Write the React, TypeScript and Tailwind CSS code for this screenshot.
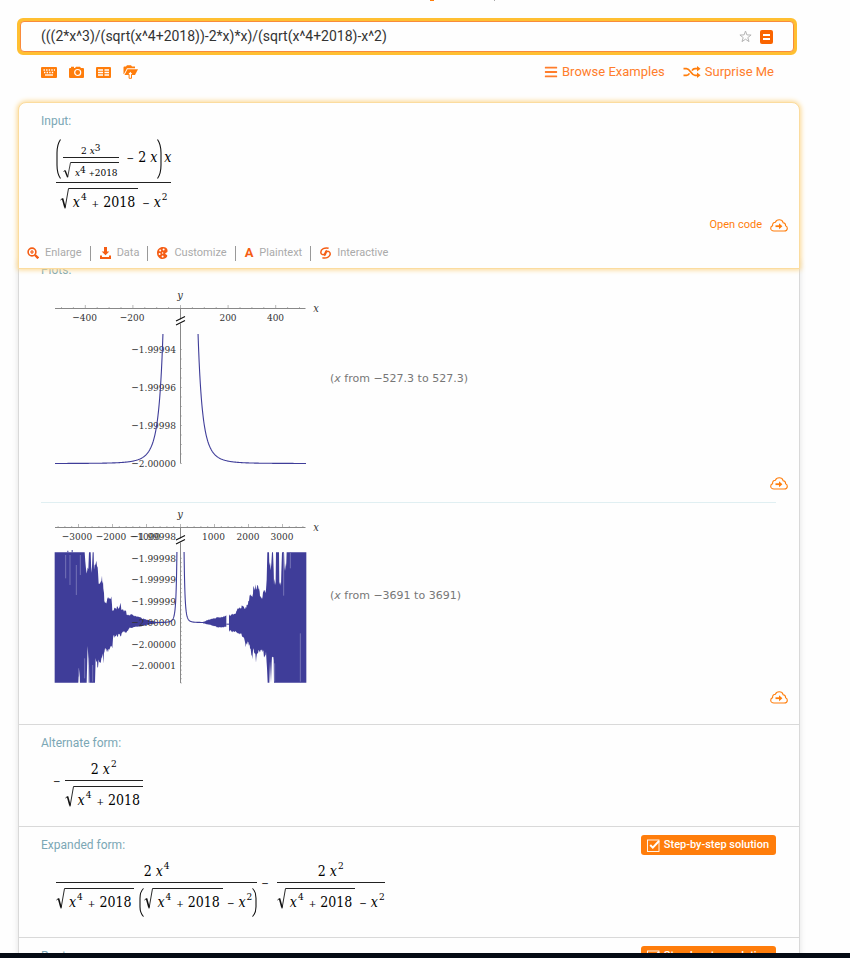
import type { ReactNode } from 'react';
import { FaBars } from 'react-icons/fa';

const SERIF = "font-['DejaVu_Serif_Condensed','Liberation_Serif',serif]";

/* ---------- formula parts ---------- */

function T({ children }: { children: ReactNode }) {
  return <span className="whitespace-pre text-sm leading-5">{children}</span>;
}

function X({ p }: { p?: string }) {
  return (
    <>
      <i>x</i>
      {p && <sup className="static ml-px align-[7px] text-[10px] leading-[0]">{p}</sup>}
    </>
  );
}

function Plus() {
  return <span className="ml-[5px] mr-1 text-[10px] leading-[0]">+</span>;
}

function Minus() {
  return <span className="mx-1 text-[10px] leading-[0]">−</span>;
}

function Sqrt({ children, small = false }: { children: ReactNode; small?: boolean }) {
  return (
    <span className="inline-flex items-stretch">
      <svg className={small ? 'h-[17px] w-2' : 'h-6 w-[9px]'} viewBox={small ? '0 0 8 17' : '0 0 9 24'} fill="none" stroke="#111">
        {small ? (
          <>
            <path d="M0.5 9.5L2 8.5" strokeWidth="0.8" />
            <path d="M2 8.5L4.6 15" strokeWidth="1.4" />
            <path d="M4.6 15.5L7.5 0.5H8" strokeWidth="0.8" />
          </>
        ) : (
          <>
            <path d="M0.5 12L2.5 10.5" strokeWidth="0.9" />
            <path d="M2.5 10.5L5 19.5" strokeWidth="1.6" />
            <path d="M5 20.5L8.5 0.5H9" strokeWidth="0.9" />
          </>
        )}
      </svg>
      <span className={`flex border-t border-[#222] ${small ? 'pl-1 pr-px pt-1' : 'pl-1 pr-[3px] pt-[3px]'}`}>{children}</span>
    </span>
  );
}

function Paren({ right = false, tall = false }: { right?: boolean; tall?: boolean }) {
  return (
    <svg
      className={`w-[5px] ${tall ? 'h-10' : 'h-[29px]'} ${right ? '-scale-x-100' : ''}`}
      viewBox="0 0 5 40"
      preserveAspectRatio="none"
      fill="none"
      stroke="#111"
    >
      <path d="M4.5 0.5C2 4 1 8 1 14V26C1 32 2 36 4.5 39.5" strokeWidth="1.1" />
    </svg>
  );
}

function Frac({ top, bottom }: { top: ReactNode; bottom: ReactNode }) {
  return (
    <span className="inline-flex flex-col items-center">
      <span className="flex">{top}</span>
      <span className="mb-[5px] mt-px h-px w-full bg-[#222]" />
      <span className="flex items-start">{bottom}</span>
    </span>
  );
}

function Radicand() {
  return (
    <Sqrt>
      <T><X p="4" /><Plus />2018</T>
    </Sqrt>
  );
}

function MinusXSquared() {
  return (
    <span className="mt-1 flex"><T><Minus /><X p="2" /></T></span>
  );
}

function InputFormula() {
  return (
    <div className={`ml-[37px] mt-2 flex text-black ${SERIF}`}>
      <Frac
        top={
          <span className="mb-[2px] flex items-start">
            <Paren tall />
            <span className="mt-1.5 inline-flex flex-col items-center px-0.5 text-[10px] leading-3">
              <span>2 <i>x</i><sup className="static align-[3px] text-[10px] leading-[0]">3</sup></span>
              <span className="mb-1 h-px w-full bg-[#222]" />
              <Sqrt small>
                <span className="leading-3"><i>x</i><sup className="static align-[3px] text-[10px] leading-[0]">4</sup> <span className="text-[8px] leading-[0]">+</span>2018</span>
              </Sqrt>
            </span>
            <span className="mt-2 flex pl-0.5"><T><Minus />2 <X /></T></span>
            <Paren right tall />
            <span className="mt-2 flex pl-0.5"><T><X /></T></span>
          </span>
        }
        bottom={<><Radicand /><MinusXSquared /></>}
      />
    </div>
  );
}

function AlternateFormula() {
  return (
    <div className={`ml-[30px] mt-1.5 flex items-start text-black ${SERIF}`}>
      <span className="mt-[11px] flex"><T><Minus /></T></span>
      <Frac top={<T>2 <X p="2" /></T>} bottom={<Radicand />} />
    </div>
  );
}

function ExpandedFormula() {
  return (
    <div className={`ml-[37px] mt-1.5 flex items-start text-black ${SERIF}`}>
      <Frac
        top={<T>2 <X p="4" /></T>}
        bottom={
          <>
            <Radicand />
            <span className="ml-[5px] flex"><Paren /></span>
            <Radicand />
            <MinusXSquared />
            <Paren right />
          </>
        }
      />
      <span className="mr-1 mt-[11px] flex"><T><Minus /></T></span>
      <Frac top={<T>2 <X p="2" /></T>} bottom={<><Radicand /><MinusXSquared /></>} />
    </div>
  );
}

/* ---------- plots ---------- */

const CX = 138.5;

function range(n: number) {
  return Array.from({ length: n * 2 + 1 }, (_, i) => i - n);
}

function branch(sign: number, perX: number, perY: number, base: number, top: number, max: number) {
  const start = Math.pow((2018 * perY) / (base - top), 0.25);
  const pts: string[] = [];
  for (let i = 0; i <= 160; i++) {
    const v = start * Math.pow(max / start, i / 160);
    pts.push(`${(CX + sign * v * perX).toFixed(2)},${(base - (2018 * perY) / Math.pow(v, 4)).toFixed(2)}`);
  }
  return pts.join(' ');
}

interface AxesProps {
  step: number;
  count: number;
  major: number;
  bottom: number;
  yStep: number;
  xLabels: [number, string][];
  yLabels: [number, string][];
}

function Axes({ step, count, major, bottom, yStep, xLabels, yLabels }: AxesProps) {
  const yTicks = Array.from({ length: Math.floor((bottom - 44) / yStep) }, (_, i) => bottom - i * yStep);
  return (
    <g>
      <g stroke="#888" strokeWidth="1" fill="none">
        <path d="M13 20.5H263.5" />
        <path d={`M${CX} 20V${bottom}`} />
        {range(count).map((i) => (
          <path key={i} strokeWidth="0.6" d={`M${CX + i * step} 20V${i % major === 0 ? 17 : 19}`} />
        ))}
        {yTicks.map((y) => (
          <path key={y} strokeWidth="0.5" d={`M${CX} ${y}h1.5`} />
        ))}
      </g>
      <path d="M134 34L143 29V33L134 38Z" fill="#fefefe" />
      <path d="M134 33L143 28.5M134 37L143 32.5" stroke="#111" strokeWidth="1.1" />
      <g fill="#333" className={`text-[10px] ${SERIF}`}>
        {xLabels.map(([x, t]) => (
          <text key={t} x={x} y="33" textAnchor="middle">{t}</text>
        ))}
        {yLabels.map(([y, t]) => (
          <text key={y} x="134" y={y} textAnchor="end">{t}</text>
        ))}
        <text x="138" y="11" textAnchor="middle" className="text-[11px] italic">y</text>
        <text x="274" y="24" textAnchor="middle" className="text-[11px] italic">x</text>
      </g>
    </g>
  );
}

function NearPlot() {
  return (
    <svg className="h-[183px] w-[288px] shrink-0" viewBox="0 0 288 183" role="img" aria-label="Plot for x from −527.3 to 527.3">
      <Axes
        step={11.9}
        count={10}
        major={4}
        bottom={175.5}
        yStep={9.5}
        xLabels={[[42.5, '−400'], [90, '−200'], [186, '200'], [233.5, '400']]}
        yLabels={[[65, '−1.99994'], [103, '−1.99996'], [141, '−1.99998'], [179, '−2.00000']]}
      />
      <g fill="none" stroke="#3f3d99" strokeWidth="1.1">
        <polyline points={branch(-1, 0.238, 1900000, 175.5, 46, 527.3)} />
        <polyline points={branch(1, 0.238, 1900000, 175.5, 46, 527.3)} />
      </g>
    </svg>
  );
}

type Pt = [number, number];

const LEFT_TOP: Pt[] = [[14, 22], [104, 22], [108, 60], [113, 45], [117, 22], [122, 22], [124, 80], [128, 22], [131, 22], [132, 60], [135, 38], [141, 38], [144, 80], [148, 100], [152, 95], [157, 85], [160, 110], [163, 150], [167, 165], [172, 152], [184, 145], [187, 190], [197, 185], [205, 183], [211, 170], [214, 190], [228, 195], [230, 208], [245, 207], [260, 212], [280, 220], [300, 226], [325, 232]];
const LEFT_BOTTOM: Pt[] = [[14, 413], [84, 413], [87, 400], [90, 413], [110, 413], [113, 320], [118, 413], [135, 413], [137, 350], [142, 368], [152, 370], [156, 340], [160, 362], [163, 330], [170, 333], [178, 322], [187, 315], [190, 280], [205, 275], [213, 275], [218, 262], [228, 265], [240, 250], [260, 247], [280, 243], [300, 239], [325, 234]];
const RIGHT_A_TOP: Pt[] = [[70, 230], [85, 224], [105, 218], [125, 214], [139, 211]];
const RIGHT_A_BOTTOM: Pt[] = [[70, 236], [90, 240], [110, 247], [125, 250], [139, 245]];
const RIGHT_B_TOP: Pt[] = [[147, 207], [165, 205], [172, 190], [185, 180], [195, 185], [200, 175], [205, 165], [210, 145], [215, 150], [220, 118], [230, 115], [237, 112], [240, 135], [247, 150], [252, 125], [258, 125], [260, 95], [262, 22], [267, 22], [268, 60], [272, 40], [276, 22], [279, 22], [282, 90], [287, 100], [288, 22], [297, 22], [298, 100], [303, 100], [304, 50], [306, 22], [312, 22], [317, 60], [320, 22], [379, 22]];
const RIGHT_B_BOTTOM: Pt[] = [[147, 262], [165, 262], [180, 270], [192, 280], [197, 315], [203, 300], [210, 310], [217, 345], [222, 325], [229, 360], [232, 330], [240, 335], [250, 330], [253, 345], [258, 340], [261, 380], [263, 413], [268, 413], [270, 350], [273, 413], [276, 350], [281, 350], [282, 413], [379, 413]];

function jagged(pts: Pt[]) {
  const out: string[] = [];
  let k = 1;
  for (let i = 0; i < pts.length - 1; i++) {
    const [x0, y0] = pts[i];
    const [x1, y1] = pts[i + 1];
    for (let x = x0; x < x1; x += 2) {
      k = (k * 73 + 41) % 101;
      const y = y0 + ((y1 - y0) * (x - x0)) / (x1 - x0);
      const full = y <= 22.5 || y >= 412.5;
      out.push(`${x},${(full ? y : y + (232 - y) * 0.22 * (k / 101)).toFixed(1)}`);
    }
  }
  out.push(pts[pts.length - 1].join(','));
  return out;
}

function band(top: Pt[], bottom: Pt[]) {
  return [...jagged(top), ...jagged(bottom).reverse()].join(' ');
}

function FarPlot() {
  return (
    <svg className="h-[178px] w-[288px] shrink-0" viewBox="0 0 288 178" role="img" aria-label="Plot for x from −3691 to 3691">
      <g fill="#3f3d99">
        <g transform="translate(8 38) scale(0.33333)">
          <polygon points={band(LEFT_TOP, LEFT_BOTTOM)} />
          <path d="M52 22V17H55V22M65 22V15H68V22" />
          <g stroke="#8f8ec6" strokeWidth="2">
            <path d="M60 30V120M79 60V150M91 30V90M86 370V413M47 30V100M104 340V400M116 340V413M128 360V410" />
          </g>
        </g>
        <g transform="translate(138 38) scale(0.33333)">
          <polygon points={band(RIGHT_A_TOP, RIGHT_A_BOTTOM)} />
          <polygon points={band(RIGHT_B_TOP, RIGHT_B_BOTTOM)} />
          <path d="M139 236H147V239H139Z" />
          <g stroke="#8f8ec6" strokeWidth="2">
            <path d="M311 24V152M361 265V410M331 24V70M284 355V410" />
          </g>
        </g>
      </g>
      <Axes
        step={6.8}
        count={18}
        major={5}
        bottom={176}
        yStep={4.3}
        xLabels={[[35, '−3000'], [69, '−2000'], [103, '−1000'], [171.5, '1000'], [206, '2000'], [240, '3000']]}
        yLabels={[[33, '−1.99998'], [55, '−1.99998'], [76, '−1.99999'], [98, '−1.99999'], [119, '−2.00000'], [141, '−2.00000'], [162, '−2.00001']]}
      />
      <g fill="none" stroke="#3f3d99" strokeWidth="1.1">
        <polyline points={branch(-1, 0.034, 4300000, 115.5, 45, 1100)} />
        <polyline points={branch(1, 0.034, 4300000, 115.5, 45, 800)} />
      </g>
    </svg>
  );
}

/* ---------- icons ---------- */

function CloudIcon() {
  return (
    <svg className="h-[13px] w-[18px]" viewBox="0 0 18 13" fill="none" stroke="#ff7d0b" strokeWidth="1.1">
      <path d="M4 12C2 12 0.7 10.8 0.7 9.2C0.7 7.8 1.6 6.9 2.6 6.6C2.4 4.6 3.6 3.3 5.4 3.3C6 1.7 7.3 0.8 9.2 0.8C11.3 0.8 12.7 2 13.1 3.7C14.8 3.9 15.7 5 15.6 6.7C16.7 7.1 17.3 8 17.3 9.2C17.3 10.9 16 12 14.2 12Z" />
      <path d="M5.5 7.2H10" strokeWidth="1.8" />
      <path d="M9 4.2L12.4 7.2L9 10.2Z" fill="#ff7d0b" stroke="none" />
    </svg>
  );
}

function StarIcon() {
  return (
    <svg className="size-[13px]" viewBox="0 0 13 13" fill="none" stroke="#b5b5b5" strokeWidth="1">
      <path d="M6.5 1L7.9 4.9L12.1 5L8.8 7.6L10 11.6L6.5 9.2L3 11.6L4.2 7.6L0.9 5L5.1 4.9Z" />
    </svg>
  );
}

function ShuffleIcon() {
  return (
    <svg className="h-3 w-[18px]" viewBox="0 0 18 12" fill="none" stroke="#ff7d0b" strokeWidth="1.7">
      <path d="M0.5 2.7H3.5C7.5 2.7 8 9.3 12 9.3H14.5" />
      <path d="M0.5 9.3H3.5C4.9 9.3 5.8 8.5 6.5 7.4M9 4.6C9.7 3.5 10.6 2.7 12 2.7H14.5" />
      <path d="M14 0L17.6 2.7L14 5.4ZM14 6.6L17.6 9.3L14 12Z" fill="#ff7d0b" stroke="none" />
    </svg>
  );
}

function TableIcon() {
  return (
    <svg className="h-[11px] w-[15px]" viewBox="0 0 15 11">
      <rect width="15" height="11" rx="1" fill="#ff7d0b" />
      <path d="M2 3H7M8.5 3H13M2 5.5H7M8.5 5.5H13M2 8H7M8.5 8H13" stroke="#fff" strokeWidth="1.3" />
    </svg>
  );
}

function KeyboardIcon() {
  return (
    <svg className="h-[11px] w-4" viewBox="0 0 16 11">
      <rect width="16" height="11" rx="1" fill="#ff7d0b" />
      <path d="M2.5 3H14M3 5.5H13" stroke="#fff" strokeWidth="1.3" strokeDasharray="1.4 1.2" />
      <path d="M4 8H12" stroke="#fff" strokeWidth="1.3" />
    </svg>
  );
}

function CameraIcon() {
  return (
    <svg className="h-3 w-[15px]" viewBox="0 0 15 12">
      <path d="M1 2H2V0.8H5V2H6L7 0.8H11L12 2H14Q15 2 15 3V11Q15 12 14 12H1Q0 12 0 11V3Q0 2 1 2Z" fill="#ff7d0b" />
      <circle cx="8.7" cy="6.5" r="3" fill="none" stroke="#fff" strokeWidth="1.2" />
    </svg>
  );
}

function UploadIcon() {
  return (
    <svg className="h-[14px] w-[15px]" viewBox="0 0 15 14">
      <path d="M0.5 9V2.5Q0.5 1.5 1.5 1.5H3L4 0.3H8L9 1.5H12V3.2H4L1 9Z" fill="#ff7d0b" />
      <path d="M4.5 4.2H15L12 10H1.5Z" fill="#ff7d0b" />
      <path d="M7.3 6.4L10.2 9.4H8.5V13.3H6.1V9.4H4.4Z" fill="#fff" stroke="#ff7d0b" strokeWidth="1" />
    </svg>
  );
}

function EnlargeIcon() {
  return (
    <svg className="size-3" viewBox="0 0 12 12" fill="none" stroke="#f55d14">
      <circle cx="5" cy="5" r="3.9" strokeWidth="1.6" />
      <path d="M8 8L11.3 11.3" strokeWidth="2.4" />
      <path d="M5 3V7M3 5H7" strokeWidth="1.2" />
    </svg>
  );
}

function DownloadIcon() {
  return (
    <svg className="h-3 w-[11px]" viewBox="0 0 11 12" fill="#f55d14">
      <path d="M4 0H7V4.5H9.3L5.5 8.3L1.7 4.5H4Z" />
      <path d="M0 8.5H2V10H9V8.5H11V12H0Z" />
    </svg>
  );
}

function PaletteIcon() {
  return (
    <svg className="h-3 w-[11px]" viewBox="0 0 11 12">
      <path d="M6 0C9 0 10.6 1.6 10.6 4C10.6 5.4 9.4 5.6 8.6 6C7.8 6.6 8.6 7.4 9.6 7.8C10.6 8.3 10.4 9.4 9.6 10.3C8.6 11.5 7.2 12 5.8 12C2.4 12 0 9.4 0 6C0 2.4 2.6 0 6 0Z" fill="#f55d14" />
      <g fill="#fff">
        <circle cx="6.6" cy="2.4" r="1" />
        <circle cx="3.2" cy="3.6" r="1" />
        <circle cx="2.6" cy="7" r="1" />
        <circle cx="5.6" cy="6" r="0.8" />
        <circle cx="5.6" cy="9.4" r="1" />
      </g>
    </svg>
  );
}

function InteractiveIcon() {
  return (
    <svg className="h-3 w-[11px]" viewBox="0 0 11 12" fill="none" stroke="#f55d14" strokeWidth="1.5">
      <path d="M8.6 1.2C4.8 0.2 0.8 2 0.8 5.2C0.8 7.4 3 8.2 4.4 7.2C5.8 6.2 4.8 4.2 6.8 3.4" />
      <path d="M2.4 10.8C6.2 11.8 10.2 10 10.2 6.8C10.2 4.6 8 3.8 6.6 4.8C5.2 5.8 6.2 7.8 4.2 8.6" />
    </svg>
  );
}

/* ---------- page pieces ---------- */

function Heading({ children }: { children: ReactNode }) {
  return <h2 className="pl-[22px] text-xs leading-5 text-[#7ba7b5]">{children}</h2>;
}

function StepButton() {
  return (
    <button className="flex h-5 items-center gap-1 rounded-[3px] bg-[#ff7d0b] pl-1.5 pr-[7px] text-[11px] font-medium text-white">
      <svg className="size-[13px]" viewBox="0 0 13 13" fill="none" stroke="#fff">
        <rect x="0.5" y="1" width="11.5" height="11.5" strokeWidth="0.9" />
        <path d="M3.2 6L5.8 8.6L12 2" strokeWidth="2" />
      </svg>
      Step-by-step solution
    </button>
  );
}

function CloudRow() {
  return (
    <div className="flex justify-end pr-[11px]">
      <button aria-label="Open code" className="flex h-4 items-center"><CloudIcon /></button>
    </div>
  );
}

function ToolLink({ icon, label, last = false }: { icon: ReactNode; label: string; last?: boolean }) {
  return (
    <li className={`flex h-[15px] items-center ${last ? '' : 'mr-[9px] border-r border-[#999] pr-2'}`}>
      <a href="#" className="flex items-center gap-1.5">{icon}{label}</a>
    </li>
  );
}

export default function App() {
  return (
    <div className="flex h-screen flex-col overflow-hidden bg-[#fefefe] font-['Roboto',sans-serif]">
      <main className="min-h-0 flex-1 overflow-hidden">
        <div className="flex h-px justify-center gap-[60px] pl-[74px]">
          <span className="w-1 bg-[#ff7d0b]" />
          <span className="w-px bg-[#aaa]" />
        </div>

        <form className="ml-[17px] mr-[53px] mt-[17px] rounded-md border-[3px] border-[#ffbf31] bg-[#ffbf31]">
          <div className="flex h-[31px] items-center gap-2 rounded-[4px] border border-[#f98b3c] bg-[#fefefe] pl-5 pr-5">
            <input
              aria-label="Query"
              className="mb-px min-w-0 flex-1 bg-transparent text-sm text-[#333] outline-none"
              defaultValue="(((2*x^3)/(sqrt(x^4+2018))-2*x)*x)/(sqrt(x^4+2018)-x^2)"
            />
            <button type="button" aria-label="Favorite"><StarIcon /></button>
            <button type="button" aria-label="Compute" className="flex h-[14px] w-[13px] flex-col items-center justify-center gap-[2px] rounded-[2px] bg-[#fa6400]">
              <span className="h-[2px] w-[7px] bg-white" />
              <span className="h-[2px] w-[7px] bg-white" />
            </button>
          </div>
        </form>

        <nav className="ml-[41px] mr-[76px] mt-[7px] flex h-5 items-center justify-between">
          <div className="flex items-center gap-3">
            <button aria-label="Keyboard"><KeyboardIcon /></button>
            <button aria-label="Image"><CameraIcon /></button>
            <button aria-label="Table"><TableIcon /></button>
            <button aria-label="Upload"><UploadIcon /></button>
          </div>
          <div className="flex items-center gap-[18px] text-[13px] text-[#ff7d2b]">
            <a href="#" className="flex items-center gap-1"><FaBars className="size-[14px]" />Browse Examples</a>
            <a href="#" className="flex items-center gap-1"><ShuffleIcon />Surprise Me</a>
          </div>
        </nav>

        <div className="ml-[18px] mr-[50px] mt-5">
          <section className="relative z-10 rounded-t-lg border border-[#fbdc9f] bg-[#fefefe] pb-[5px] pt-2 shadow-[0_0_5px_1px_#fcd890]">
            <Heading>Input:</Heading>
            <InputFormula />
            <div className="mt-[3px] flex h-5 items-center justify-end pr-[11px]">
              <button className="flex items-center gap-2 text-[11px] text-[#ff7d0b]">Open code<CloudIcon /></button>
            </div>
            <ul className="mt-2 flex h-5 items-center pl-2 text-[11px] text-[#aaa]">
              <ToolLink icon={<EnlargeIcon />} label="Enlarge" />
              <ToolLink icon={<DownloadIcon />} label="Data" />
              <ToolLink icon={<PaletteIcon />} label="Customize" />
              <ToolLink icon={<b className="text-[13px] text-[#f55d14]">A</b>} label="Plaintext" />
              <ToolLink icon={<InteractiveIcon />} label="Interactive" last />
            </ul>
          </section>

          <div className="border-x border-[#d9d9d9] shadow-[0_0_6px_#e4e4e4]">
            <section className="-mt-[9px] pb-[19px]">
              <Heading>Plots:</Heading>
              <div className="mt-2 flex items-center pl-[23px] font-['DejaVu_Sans',sans-serif] text-[11px] text-[#777]">
                <NearPlot />
                <p>(<i>x</i> from −527.3 to 527.3)</p>
              </div>
              <div className="mt-1"><CloudRow /></div>
              <hr className="ml-[22px] mr-[23px] mt-[11px] border-[#e0eff2]" />
              <div className="mt-1 flex items-center pl-[23px] font-['DejaVu_Sans',sans-serif] text-[11px] text-[#777]">
                <FarPlot />
                <p>(<i>x</i> from −3691 to 3691)</p>
              </div>
              <div className="mt-1"><CloudRow /></div>
            </section>

            <section className="border-t border-[#d9d9d9] pb-4 pt-2">
              <Heading>Alternate form:</Heading>
              <AlternateFormula />
            </section>

            <section className="border-t border-[#d9d9d9] pb-5 pt-2">
              <div className="flex items-start justify-between pr-[23px]">
                <Heading>Expanded form:</Heading>
                <StepButton />
              </div>
              <ExpandedFormula />
            </section>

            <section className="border-t border-[#d9d9d9] pb-6 pt-2">
              <div className="flex items-start justify-between pr-[23px]">
                <Heading>Root:</Heading>
                <StepButton />
              </div>
              <div className={`ml-[37px] mt-1.5 text-black ${SERIF}`}><T><X /> = 0</T></div>
            </section>
          </div>
        </div>
      </main>
      <footer className="h-[5px] shrink-0 bg-[#050b14]" />
    </div>
  );
}
